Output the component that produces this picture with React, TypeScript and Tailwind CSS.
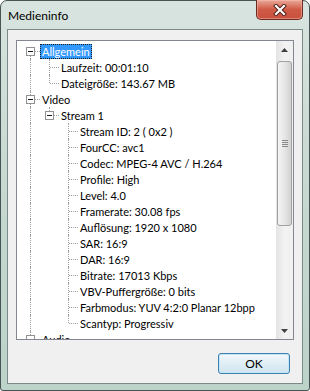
import React from "react";

type TreeNode = { label: string; children?: TreeNode[]; expanded?: boolean; selected?: boolean };

const tree: TreeNode[] = [
  {
    label: "Allgemein",
    selected: true,
    expanded: true,
    children: [{ label: "Laufzeit: 00:01:10" }, { label: "Dateigröße: 143.67 MB" }],
  },
  {
    label: "Video",
    expanded: true,
    children: [
      {
        label: "Stream 1",
        expanded: true,
        children: [
          { label: "Stream ID: 2 ( 0x2 )" },
          { label: "FourCC: avc1" },
          { label: "Codec: MPEG-4 AVC / H.264" },
          { label: "Profile: High" },
          { label: "Level: 4.0" },
          { label: "Framerate: 30.08 fps" },
          { label: "Auflösung: 1920 x 1080" },
          { label: "SAR: 16:9" },
          { label: "DAR: 16:9" },
          { label: "Bitrate: 17013 Kbps" },
          { label: "VBV-Puffergröße: 0 bits" },
          { label: "Farbmodus: YUV 4:2:0 Planar 12bpp" },
          { label: "Scantyp: Progressiv" },
        ],
      },
    ],
  },
  { label: "Audio", expanded: false, children: [{ label: "Stream 1" }] },
];

type Row = { node: TreeNode; guides: boolean[]; isLast: boolean; isFirstRoot: boolean };

function flatten(nodes: TreeNode[], guides: boolean[], out: Row[]) {
  nodes.forEach((n, i) => {
    const isLast = i === nodes.length - 1;
    out.push({ node: n, guides, isLast, isFirstRoot: guides.length === 0 && i === 0 });
    if (n.children && n.expanded) flatten(n.children, [...guides, !isLast], out);
  });
}

function TreeRow({ row }: { row: Row }) {
  const { node, guides, isLast, isFirstRoot } = row;
  const vertical = isFirstRoot ? "top-[8px] bottom-0" : isLast ? "top-0 h-[8px]" : "top-0 bottom-0";
  return (
    <div className="flex h-4 items-center">
      {guides.map((g, i) => (
        <span key={i} className="relative h-4 w-[19px] shrink-0">
          {g && <span className="absolute left-[9px] top-0 bottom-0 border-l border-dotted border-[#a0a0a0]" />}
        </span>
      ))}
      <span className="relative h-4 w-[19px] shrink-0">
        <span className={`absolute left-[9px] border-l border-dotted border-[#a0a0a0] ${vertical}`} />
        <span className="absolute left-[10px] top-[8px] w-[9px] border-t border-dotted border-[#a0a0a0]" />
        {node.children && (
          <span className="absolute left-[5px] top-[4px] flex h-[9px] w-[9px] items-center justify-center border border-[#919191] bg-white">
            <span className="h-px w-[5px] bg-[#1a1a1a]" />
          </span>
        )}
      </span>
      <span
        className={`h-[15px] whitespace-nowrap border px-px leading-[13px] ${
          node.selected ? "border-dotted border-[#1e1e1e] bg-[#3399ff] text-white" : "border-transparent text-black"
        }`}
      >
        {node.label}
      </span>
    </div>
  );
}

function Arrow({ up }: { up?: boolean }) {
  return (
    <svg width="7" height="4" viewBox="0 0 7 4">
      <path d={up ? "M0 4 L3.5 0 L7 4 Z" : "M0 0 L3.5 4 L7 0 Z"} fill="#404040" />
    </svg>
  );
}

function ScrollBar() {
  return (
    <div className="flex w-[17px] shrink-0 flex-col bg-gradient-to-r from-[#e3e3e3] via-[#f2f2f2] to-[#f0f0f0]">
      <div className="flex h-[17px] items-center justify-center">
        <Arrow up />
      </div>
      <div className="flex-1 px-px pt-[3px]">
        <div className="flex h-[165px] flex-col items-center justify-center gap-[1px] rounded-[3px] border border-[#a0a0a0] bg-gradient-to-r from-[#f4f4f4] via-[#e6e6e6] to-[#d2d2d2]">
          <span className="h-px w-[6px] bg-[#8a8a8a]" />
          <span className="h-px w-[6px] bg-[#8a8a8a]" />
          <span className="h-px w-[6px] bg-[#8a8a8a]" />
          <span className="h-px w-[6px] bg-[#8a8a8a]" />
        </div>
      </div>
      <div className="flex h-[17px] items-center justify-center">
        <Arrow />
      </div>
    </div>
  );
}

function CloseButton() {
  return (
    <div className="-mt-px mr-[6px] flex h-[20px] w-[47px] items-center justify-center rounded-b-[5px] border border-t-0 border-[#6b2a20] bg-gradient-to-b from-[#e9a898] via-[#cf5a45] to-[#c8513d] shadow-[inset_0_0_0_1px_rgba(255,200,190,0.45)]">
      <svg width="14" height="12" viewBox="0 0 14 12">
        <path d="M3 2 L11 10 M11 2 L3 10" stroke="#4a1a14" strokeWidth="4" strokeLinecap="square" />
        <path d="M3 2 L11 10 M11 2 L3 10" stroke="#ffffff" strokeWidth="2.2" strokeLinecap="square" />
      </svg>
    </div>
  );
}

export default function App() {
  const rows: Row[] = [];
  flatten(tree, [], rows);

  return (
    <div className="h-[391px] w-[310px] font-['Lato','Noto_Sans',sans-serif] text-[11px]">
      <div className="flex h-full flex-col rounded-t-[7px] rounded-b-[3px] border border-[#465553] bg-gradient-to-b from-[#d8e4df] via-[#c6d8d0] to-[#bcd3c9] px-[6px] pb-[6px]">
        {/* Titelleiste */}
        <div className="-mx-[6px] flex h-[28px] shrink-0 items-start justify-between">
          <span className="pl-[7px] pt-[8px] text-[12px] leading-[14px] text-black">Medieninfo</span>
          <CloseButton />
        </div>

        {/* Inhalt */}
        <div className="flex flex-1 flex-col border border-[#7b8b88] bg-[#f0f0f0] px-[8px] pt-[10px]">
          <div className="flex h-[300px] shrink-0 border border-[#828790] bg-white">
            <div className="flex-1 overflow-hidden pl-[4px] pt-[2px]">
              {rows.map((row, i) => (
                <TreeRow key={i} row={row} />
              ))}
            </div>
            <ScrollBar />
          </div>
          <div className="mt-[13px] flex justify-end pr-[4px]">
            <button className="flex h-[21px] w-[72px] items-center justify-center rounded-[3px] border border-[#3c7fb1] bg-gradient-to-b from-[#f2f8fc] via-[#e0eef6] to-[#cfe4ef] text-[12px] text-black shadow-[inset_0_0_0_1px_#c4e6f8]">
              OK
            </button>
          </div>
        </div>
      </div>
    </div>
  );
}
